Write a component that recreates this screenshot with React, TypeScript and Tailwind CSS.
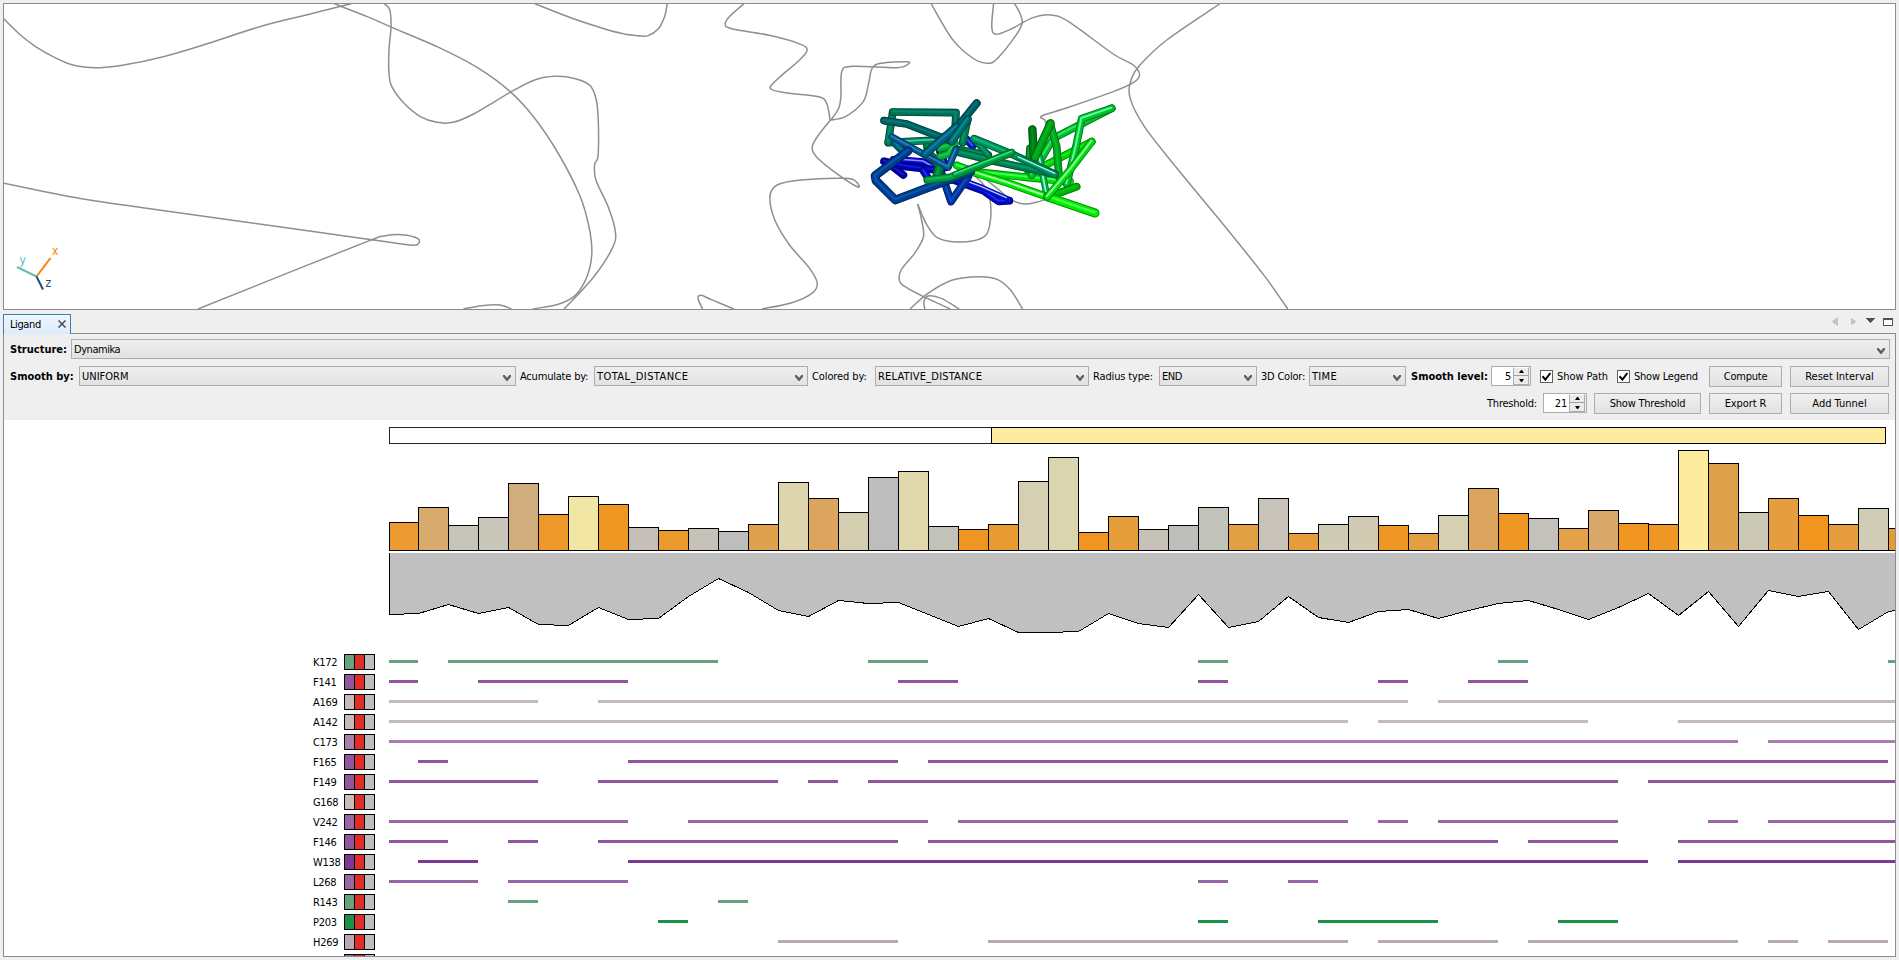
import React from "react";

type Point = [number, number];

/* ---------- shared helpers ---------- */

const smooth = (pts: Point[]) => {
  let d = `M${pts[0][0]} ${pts[0][1]}`;
  for (let i = 0; i < pts.length - 1; i++) {
    const a = pts[Math.max(0, i - 1)];
    const b = pts[i];
    const c = pts[i + 1];
    const e = pts[Math.min(pts.length - 1, i + 2)];
    const x1 = b[0] + (c[0] - a[0]) / 6;
    const y1 = b[1] + (c[1] - a[1]) / 6;
    const x2 = c[0] - (e[0] - b[0]) / 6;
    const y2 = c[1] - (e[1] - b[1]) / 6;
    d += `C${x1.toFixed(1)} ${y1.toFixed(1)} ${x2.toFixed(1)} ${y2.toFixed(1)} ${c[0]} ${c[1]}`;
  }
  return d;
};

/* ---------- 3D viewer ---------- */

const LEFT_CURVES: Point[][] = [
  [[8, 55], [50, 105], [90, 142], [130, 170], [170, 192], [205, 201], [245, 203], [300, 196], [400, 170], [500, 134], [640, 79], [760, 42], [860, 11]],
  [[818, 11], [900, 50], [960, 82], [1080, 145], [1170, 203], [1250, 275], [1310, 355], [1370, 465], [1420, 585], [1443, 680], [1450, 760], [1438, 830], [1410, 885], [1370, 912], [1305, 927]],
  [[942, 11], [955, 30], [958, 80], [953, 150], [953, 220], [960, 260], [990, 310], [1030, 350], [1070, 367], [1110, 367], [1160, 342], [1250, 277], [1310, 240], [1360, 229], [1410, 236], [1445, 256], [1461, 300], [1466, 370], [1465, 470], [1457, 492], [1460, 540], [1490, 620], [1507, 690], [1502, 740], [1455, 830], [1382, 927]],
  [[1310, 11], [1400, 54], [1480, 86], [1530, 102], [1568, 108]],
  [[8, 549], [110, 575], [200, 596], [350, 623], [600, 666], [910, 719], [1005, 735], [1024, 732], [1024, 716], [985, 704], [940, 708], [905, 722], [750, 797], [485, 927]],
  [[1135, 927], [1180, 917], [1225, 915], [1253, 927]],
];

const RIGHT_CURVES: Point[][] = [
  [[-2, 108], [18, 107], [40, 88], [55, 50], [61, 11]],
  [[233, 11], [200, 50], [191, 72], [205, 86], [290, 106], [360, 133], [374, 152], [355, 183], [310, 235], [292, 266], [330, 279], [400, 290], [418, 310], [426, 360]],
  [[428, 358], [400, 405], [386, 440], [395, 470], [440, 520], [488, 561], [484, 545], [460, 535], [360, 540], [307, 555], [291, 590], [302, 660], [335, 735], [380, 805], [397, 850], [385, 880], [340, 908], [273, 927]],
  [[426, 360], [460, 350], [500, 305], [512, 250], [520, 205], [540, 190], [598, 185], [600, 193], [575, 203], [475, 199], [452, 215], [450, 290], [445, 325], [428, 360]],
  [[652, 11], [700, 118], [745, 174], [778, 190], [800, 176], [840, 110], [856, 70], [851, 40], [839, 11]],
  [[792, 11], [788, 80], [797, 103], [830, 88], [880, 53], [920, 45], [960, 65], [1060, 162], [1105, 195], [1119, 225], [1105, 248], [1060, 275], [960, 322], [900, 348], [908, 362], [909, 385]],
  [[1299, 11], [1180, 120], [1120, 195], [1100, 240], [1098, 295], [1130, 380], [1200, 500], [1320, 695], [1400, 830], [1451, 927]],
  [[745, 522], [770, 555], [784, 600], [785, 660], [775, 705], [745, 723], [700, 725], [665, 712], [645, 680], [632, 645], [622, 612]],
  [[622, 612], [630, 655], [635, 710], [615, 760], [585, 810], [582, 845], [600, 865], [640, 893], [695, 927]],
  [[605, 927], [645, 880], [700, 840], [760, 830], [800, 838], [830, 870], [857, 927]],
  [[638, 927], [636, 905], [645, 888], [675, 895], [715, 927]],
  [[140, 927], [130, 895], [137, 886], [160, 899], [210, 927]],
  [[758, 520], [800, 565], [830, 598], [860, 612], [890, 606], [915, 595]],
];

type Stick = { p: Point[]; c: string; hi?: string; w?: number };

const STICKS: Stick[] = [
  { p: [[145, 250], [190, 285]], c: "#0000a8", hi: "#1a1ad0" },
  { p: [[300, 215], [318, 262]], c: "#0010b4", hi: "#6a78ff" },
  { p: [[380, 178], [398, 198]], c: "#0018c8", hi: "#3c50ff" },
  { p: [[160, 238], [250, 245], [280, 262]], c: "#0606d0", hi: "#8a8cff", w: 20 },
  { p: [[132, 244], [200, 260], [290, 270]], c: "#0000b4", hi: "#1418d8" },
  { p: [[250, 272], [268, 300], [340, 300], [430, 332], [476, 364], [508, 362]], c: "#0008c8", hi: "#1c30ee" },
  { p: [[345, 292], [425, 322], [500, 355]], c: "#0010d8", hi: "#b8c4ff", w: 16 },
  { p: [[300, 265], [333, 365], [385, 290]], c: "#0034a0", hi: "#0c50c0" },
  { p: [[262, 190], [268, 225], [300, 255], [292, 285]], c: "#008434", hi: "#00a040", w: 28 },
  { p: [[300, 205], [345, 190], [325, 222], [300, 230]], c: "#00b038", hi: "#20c850" },
  { p: [[350, 208], [445, 226]], c: "#007e54", hi: "#009a68" },
  { p: [[570, 205], [565, 285]], c: "#009820", hi: "#00b42a" },
  { p: [[577, 148], [582, 235]], c: "#007a16", hi: "#009018", w: 25 },
  { p: [[350, 256], [400, 275], [560, 292], [690, 305]], c: "#00e010", hi: "#40ff50" },
  { p: [[815, 85], [640, 175], [575, 285]], c: "#00c02a", hi: "#30e860" },
  { p: [[755, 185], [592, 268]], c: "#00d800", hi: "#10f010" },
  { p: [[630, 130], [650, 200], [657, 290]], c: "#00a81e", hi: "#00c42a" },
  { p: [[815, 85], [725, 116], [708, 200], [680, 312]], c: "#00c02e", hi: "#60ffa0" },
  { p: [[597, 225], [620, 345]], c: "#00b050", hi: "#a0ffd0", w: 20 },
  { p: [[632, 130], [585, 232]], c: "#00a018", hi: "#00b81e", w: 25 },
  { p: [[710, 320], [628, 350]], c: "#00b00a", hi: "#00c810" },
  { p: [[400, 277], [500, 308], [620, 350]], c: "#00e800", hi: "#a8ffa8" },
  { p: [[622, 350], [765, 399]], c: "#00f000", hi: "#4cff4c", w: 27 },
  { p: [[755, 185], [690, 270], [622, 350]], c: "#00dc10", hi: "#90ffa0" },
  { p: [[350, 215], [470, 245], [645, 283]], c: "#007c52", hi: "#009c66" },
  { p: [[402, 178], [445, 225]], c: "#008054", hi: "#00a068", w: 20 },
  { p: [[402, 176], [515, 222], [645, 283]], c: "#00925c", hi: "#10b878" },
  { p: [[535, 232], [645, 282]], c: "#009c6c", hi: "#c0fff0", w: 14 },
  { p: [[145, 188], [290, 180]], c: "#00845c", hi: "#40c8a0" },
  { p: [[158, 98], [145, 186]], c: "#007c5c", hi: "#009874" },
  { p: [[158, 96], [348, 98], [345, 160]], c: "#007058", hi: "#008870" },
  { p: [[165, 190], [190, 215]], c: "#006078", hi: "#008090" },
  { p: [[155, 170], [255, 225], [325, 262], [348, 208]], c: "#005490", hi: "#2c80b8", w: 20 },
  { p: [[132, 122], [200, 132], [335, 184]], c: "#006260", hi: "#007c78" },
  { p: [[410, 70], [345, 150], [300, 180]], c: "#005c64", hi: "#007480", w: 24 },
  { p: [[350, 140], [255, 222]], c: "#006080", hi: "#0c80a0", w: 25 },
  { p: [[383, 118], [368, 188]], c: "#007e4c", hi: "#009c60" },
  { p: [[383, 118], [335, 184]], c: "#006670", hi: "#009090", w: 25 },
  { p: [[205, 212], [105, 287], [108, 302], [166, 360], [392, 275]], c: "#003c90", hi: "#0858b0", w: 26 },
  { p: [[515, 218], [330, 292], [262, 300]], c: "#009c3c", hi: "#10bc54", w: 23 },
  { p: [[515, 216], [345, 283]], c: "#00a846", hi: "#40e080", w: 16 },
];

function StickTube({ p, c, hi, w = 23 }: Stick) {
  const pts = p.map((q) => q.join(",")).join(" ");
  return (
    <g fill="none" strokeLinecap="round" strokeLinejoin="round">
      <polyline points={pts} stroke={c} strokeWidth={w} />
      <polyline points={pts} stroke="#000" strokeOpacity={0.4} strokeWidth={w} />
      <polyline points={pts} stroke={c} strokeWidth={w * 0.78} />
      {hi && <polyline points={pts} stroke={hi} strokeWidth={w * 0.25} transform="translate(-1,-2)" />}
    </g>
  );
}

function Viewer() {
  return (
    <div className="h-[307px] w-[1893px] shrink-0 border border-[#8b8b95] bg-white">
      <svg className="block h-full w-full" viewBox="4 4 1891 305" preserveAspectRatio="none">
        <g fill="none" stroke="#8f8f8f" strokeWidth="1.5">
          <g transform="scale(0.40816,0.33333)">
            {LEFT_CURVES.map((c, i) => (
              <path key={i} d={smooth(c)} vectorEffect="non-scaling-stroke" />
            ))}
          </g>
          <g transform="translate(640,0) scale(0.44643,0.33333)">
            {RIGHT_CURVES.map((c, i) => (
              <path key={i} d={smooth(c)} vectorEffect="non-scaling-stroke" />
            ))}
          </g>
        </g>
        <g transform="translate(840,80) scale(0.33333)">
          {STICKS.map((s, i) => (
            <StickTube key={i} {...s} />
          ))}
        </g>
        <g strokeWidth="2" fill="none">
          <path d="M36.5 276.5L50.5 258" stroke="#ff8000" />
          <path d="M36.5 276.5L17 267" stroke="#66bbb5" />
          <path d="M36.5 276.5L43 289.5" stroke="#1c4b75" />
        </g>
        <g fontFamily="DejaVu Sans Condensed, sans-serif" fontSize="12">
          <text x="52" y="255" fill="#ff8000">x</text>
          <text x="19.5" y="264" fill="#66bbb5">y</text>
          <text x="45.5" y="287" fill="#1c4b75">z</text>
        </g>
      </svg>
    </div>
  );
}

/* ---------- form controls ---------- */

function Combo({ value, className }: { value: string; className: string }) {
  return (
    <div
      className={`flex h-[20px] shrink-0 items-center justify-between border border-[#abadb3] bg-linear-to-b from-[#efefef] to-[#e2e2e2] pl-[2px] pr-[4px] ${className}`}
    >
      <span className="pt-px">{value}</span>
      <svg width="8" height="6" viewBox="0 0 8 6" className="mt-[3px]">
        <path d="M0 0h1.6L4 2.8 6.4 0H8v1.8L4.5 6h-1L0 1.8z" fill="#606060" />
      </svg>
    </div>
  );
}

function Spinner({ value, className }: { value: string; className: string }) {
  return (
    <div className={`flex h-[20px] shrink-0 border border-[#abadb3] bg-white ${className}`}>
      <span className="flex grow items-center justify-end pt-px pr-[2px]">{value}</span>
      <div className="flex w-[16px] flex-col border border-[#abadb3] border-t-white bg-[#ebebeb]">
        <div className="flex h-[8px] items-center justify-center border-b border-[#a0a0a0]">
          <svg width="5" height="3" viewBox="0 0 5 3">
            <path d="M2 0h1l2 3H0z" fill="#000" />
          </svg>
        </div>
        <div className="flex grow items-center justify-center">
          <svg width="5" height="3" viewBox="0 0 5 3">
            <path d="M0 0h5L3 3H2z" fill="#000" />
          </svg>
        </div>
      </div>
      <div className="w-px bg-[#ebebeb]" />
    </div>
  );
}

function Button({ label, className }: { label: string; className: string }) {
  return (
    <button
      className={`flex h-[21px] shrink-0 items-center justify-center border border-[#abadb3] bg-linear-to-b from-[#efefef] to-[#e2e2e2] ${className}`}
    >
      {label}
    </button>
  );
}

function Check({ label, className }: { label: string; className: string }) {
  return (
    <label className={`flex h-[20px] shrink-0 items-center ${className}`}>
      <span className="mt-px mr-[4px] flex size-[13px] items-center justify-center border border-[#606060] bg-white">
        <svg width="9" height="9" viewBox="0 0 9 9">
          <path d="M0.5 4.2L3.4 7.6 8.4 1" fill="none" stroke="#000" strokeWidth="2" />
        </svg>
      </span>
      <span className="pt-px">{label}</span>
    </label>
  );
}

function Toolbar() {
  return (
    <div className="h-[86px] shrink-0 bg-[#efefef] pt-[5px] pl-[6px]">
      <div className="flex h-[20px] items-center">
        <span className="w-[61px] shrink-0 pt-px font-bold tracking-normal">Structure:</span>
        <Combo value="Dynamika" className="w-[1819px] tracking-[-0.45px]" />
      </div>
      <div className="mt-[7px] flex h-[21px] items-start leading-[20px]">
        <span className="w-[69px] shrink-0 pt-px font-bold tracking-normal">Smooth by:</span>
        <Combo value="UNIFORM" className="w-[437px] tracking-normal" />
        <span className="w-[78px] shrink-0 pt-px pl-[4px] tracking-[-0.2px]">Acumulate by:</span>
        <Combo value="TOTAL_DISTANCE" className="w-[214px] tracking-[0.42px]" />
        <span className="w-[67px] shrink-0 pt-px pl-[4px] tracking-[-0.1px]">Colored by:</span>
        <Combo value="RELATIVE_DISTANCE" className="w-[214px] tracking-[0.18px]" />
        <span className="w-[70px] shrink-0 pt-px pl-[4px] tracking-[-0.15px]">Radius type:</span>
        <Combo value="END" className="w-[98px] tracking-[-0.4px]" />
        <span className="w-[52px] shrink-0 pt-px pl-[4px]">3D Color:</span>
        <Combo value="TIME" className="w-[97px] tracking-[0.3px]" />
        <span className="w-[85px] shrink-0 pt-px pl-[5px] font-bold tracking-normal">Smooth level:</span>
        <Spinner value="5" className="w-[40px]" />
        <Check label="Show Path" className="ml-[9px] w-[77px] tracking-[-0.05px]" />
        <Check label="Show Legend" className="w-[92px]" />
        <Button label="Compute" className="w-[73px]" />
        <Button label="Reset Interval" className="ml-[8px] w-[99px] tracking-normal" />
      </div>
      <div className="mt-[6px] mr-[6px] flex h-[21px] items-start justify-end leading-[20px]">
        <span className="w-[56px] shrink-0 pt-px">Threshold:</span>
        <Spinner value="21" className="w-[44px]" />
        <Button label="Show Threshold" className="ml-[7px] w-[107px]" />
        <Button label="Export R" className="ml-[8px] w-[73px] tracking-[-0.1px]" />
        <Button label="Add Tunnel" className="ml-[8px] w-[99px] tracking-normal" />
      </div>
    </div>
  );
}

/* ---------- chart ---------- */

const BARS: [number, string][] = [
  [522, "#eb9b31"], [507, "#d8aa6d"], [525, "#c7c5b8"], [517, "#c9c7b9"], [483, "#d1ac7d"],
  [514, "#ed992a"], [496, "#f2e6a5"], [504, "#ee9823"], [527, "#c4c0b9"], [530, "#ea9a2d"],
  [528, "#c6c2b8"], [531, "#bdbdbd"], [524, "#e0a14e"], [482, "#ded5ae"], [498, "#dba45f"],
  [512, "#d4ceb1"], [477, "#bdbdbd"], [471, "#e2d8ae"], [526, "#c2c2b9"], [529, "#f09521"],
  [524, "#e89a33"], [481, "#d6d0b3"], [457, "#dbd5af"], [532, "#f09520"], [516, "#e69e3a"],
  [529, "#c6c2b7"], [525, "#c0bebb"], [507, "#c2c3ba"], [524, "#e1a044"], [498, "#c8c3b8"],
  [533, "#e59d3c"], [524, "#cfcbb5"], [516, "#d2cbb3"], [525, "#ef9724"], [533, "#e49f44"],
  [515, "#d5d0b2"], [488, "#dba45f"], [513, "#ef9725"], [518, "#c4c1bc"], [528, "#e5a04a"],
  [510, "#d8a86b"], [523, "#f19620"], [524, "#ee9724"], [450, "#feec9e"], [463, "#e0a14c"],
  [512, "#cbc8b6"], [498, "#e59d3f"], [515, "#f1951f"], [524, "#e79d3d"], [508, "#d1ccb5"],
  [528, "#e89b31"],
];

const AREA = [
  614, 613, 604, 613, 607, 624, 625, 607, 619, 618, 596, 578, 592, 610, 616, 600, 603, 602, 614, 626,
  618, 632, 632, 631, 613, 623, 627, 594, 627, 621, 596, 617, 622, 611, 609, 618, 610, 603, 600, 609,
  619, 607, 593, 615, 591, 626, 590, 596, 591, 629, 611, 607,
];

const STEP = 30;
const ORIGIN = 388;
const edge = (i: number) => ORIGIN + i * STEP + (i === 0 ? 1 : 0);

function Chart() {
  const area = AREA.map((y, i) => `${edge(i) + 0.5},${y + 0.5}`).join(" ");
  return (
    <svg className="block h-[232px] w-[1891px] shrink-0" viewBox="4 420 1891 232" shapeRendering="crispEdges">
      <rect x="389.5" y="427.5" width="602" height="16" fill="#fff" stroke="#222" />
      <rect x="991.5" y="427.5" width="894" height="16" fill="#feec9e" stroke="#000" />
      {BARS.map(([y, fill], i) => (
        <rect
          key={i}
          x={edge(i) + 0.5}
          y={y + 0.5}
          width={edge(i + 1) - edge(i)}
          height={550 - y}
          fill={fill}
          stroke="#000"
        />
      ))}
      <polygon points={`389.5,553 ${area} 1918,553`} fill="#c0c0c0" />
      <polyline points={`389.5,553 ${area}`} fill="none" stroke="#000" />
    </svg>
  );
}

type Residue = { name: string; color: string; runs: [number, number][] };
const END = 51;

const RESIDUES: Residue[] = [
  { name: "K172", color: "#66a37d", runs: [[0, 1], [2, 11], [16, 18], [27, 28], [37, 38], [50, END]] },
  { name: "F141", color: "#8f559d", runs: [[0, 1], [3, 8], [17, 19], [27, 28], [33, 34], [36, 38]] },
  { name: "A169", color: "#c4b9bb", runs: [[0, 5], [7, 34], [35, END]] },
  { name: "A142", color: "#c4b9bb", runs: [[0, 32], [33, 40], [43, END]] },
  { name: "C173", color: "#a77fad", runs: [[0, 45], [46, END]] },
  { name: "F165", color: "#8f559d", runs: [[1, 2], [8, 17], [18, 50]] },
  { name: "F149", color: "#8f559d", runs: [[0, 5], [7, 13], [14, 15], [16, 41], [42, END]] },
  { name: "G168", color: "#c6bebb", runs: [] },
  { name: "V242", color: "#9965a4", runs: [[0, 8], [10, 18], [19, 32], [33, 34], [35, 41], [44, 45], [46, END]] },
  { name: "F146", color: "#8f559d", runs: [[0, 2], [4, 5], [7, 17], [18, 37], [38, 41], [43, END]] },
  { name: "W138", color: "#7f3794", runs: [[1, 3], [8, 42], [43, END]] },
  { name: "L268", color: "#9965a4", runs: [[0, 3], [4, 8], [27, 28], [30, 31]] },
  { name: "R143", color: "#66a37d", runs: [[4, 5], [11, 12]] },
  { name: "P203", color: "#1a9048", runs: [[9, 10], [27, 28], [31, 35], [39, 41]] },
  { name: "H269", color: "#b9a8b6", runs: [[13, 17], [20, 32], [33, 37], [38, 45], [46, 47], [48, 50]] },
  { name: "", color: "#8f6f9d", runs: [] },
];

function ResidueRow({ name, color, runs }: Residue) {
  return (
    <div className="flex h-[20px] shrink-0 items-center pl-[309px]">
      <span className="w-[31px] shrink-0 pt-px tracking-[-0.3px]">{name}</span>
      <div className="flex h-[16px] w-[31px] shrink-0 gap-px border border-black bg-black">
        <div className="w-[9px]" style={{ backgroundColor: color }} />
        <div className="w-[9px] bg-[#df2d27]" />
        <div className="w-[9px] bg-[#bdbdbd]" />
      </div>
      <svg className="ml-[13px] block h-[20px] w-[1507px] shrink-0" viewBox="388 0 1507 20" shapeRendering="crispEdges">
        {runs.map(([a, b]) => (
          <rect key={a} x={edge(a)} y="8" width={edge(b) - edge(a)} height="3" fill={color} />
        ))}
      </svg>
    </div>
  );
}

/* ---------- lower panel ---------- */

function TabBar() {
  return (
    <div className="relative z-10 -mb-px flex h-[24px] w-[1893px] shrink-0 items-end justify-between">
      <div className="flex h-[20px] w-[68px] items-center justify-between border border-b-0 border-[#3c7fb1] bg-linear-to-b from-[#eef6fe] to-[#dcecfc] pr-[4px] pl-[6px] tracking-[-0.4px]">
        <span>Ligand</span>
        <svg width="8" height="8" viewBox="0 0 8 8" className="mb-[2px]">
          <path d="M0.5 0.5l7 7M7.5 0.5l-7 7" stroke="#4a4a4a" strokeWidth="1.5" />
        </svg>
      </div>
      <svg width="62" height="9" viewBox="0 0 62 9" className="mr-[2px] mb-[8px]" shapeRendering="crispEdges">
        <path d="M5.5 0v9L0 4.5z" fill="#c3c3c3" />
        <path d="M18.5 0v9L24 4.5z" fill="#c3c3c3" />
        <path d="M33 1h10L38 6z" fill="#505050" />
        <path d="M51.5 1.5h9v7h-9z" fill="#fff" stroke="#505050" />
        <path d="M51 1h10v2H51z" fill="#505050" />
      </svg>
    </div>
  );
}

export default function App() {
  return (
    <div className="flex h-[960px] w-[1899px] flex-col overflow-hidden bg-[#efeff0] pt-[3px] pl-[3px] font-['DejaVu_Sans_Condensed','DejaVu_Sans',sans-serif] text-[11px] leading-[14px] tracking-[-0.22px] text-black">
      <Viewer />
      <TabBar />
      <div className="flex h-[624px] w-[1893px] shrink-0 flex-col overflow-hidden border border-[#8b8b95] bg-white">
        <Toolbar />
        <Chart />
        {RESIDUES.map((r, i) => (
          <ResidueRow key={i} {...r} />
        ))}
      </div>
    </div>
  );
}
